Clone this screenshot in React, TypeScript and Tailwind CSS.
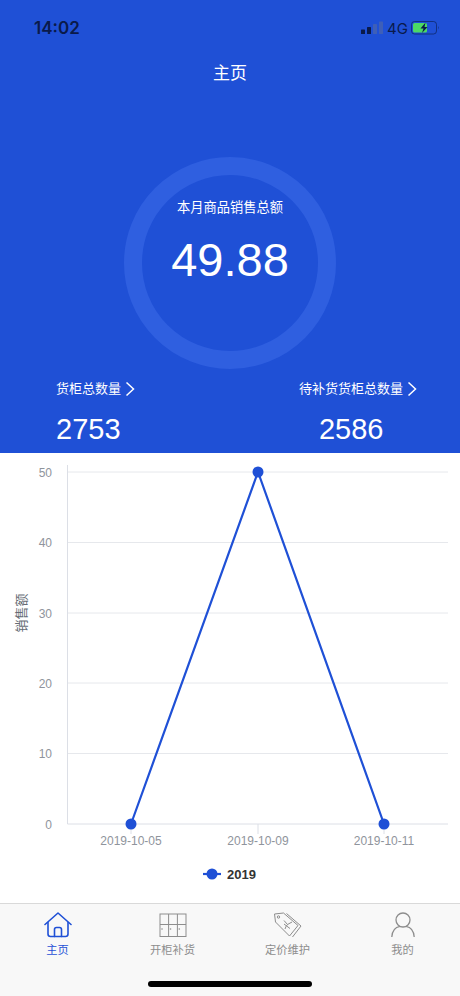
import React from "react";

const FONT = { fontFamily: '"Liberation Sans", "Noto Sans CJK SC", sans-serif' };
const INTER = { fontFamily: 'Inter, "Liberation Sans", sans-serif' };

function Chevron() {
  return (
    <svg width="10" height="16" viewBox="0 0 10 16" className="ml-[4px]">
      <path d="M1.5 1.5 L8.5 8 L1.5 14.5" fill="none" stroke="white" strokeWidth="1.5" />
    </svg>
  );
}

function StatusRight() {
  return (
    <div className="flex items-center">
      <svg width="22" height="14" viewBox="0 0 22 14">
        <rect x="0" y="8.5" width="4" height="4.5" rx="0.6" fill="#0a1a4a" />
        <rect x="6" y="6" width="4" height="7" rx="0.6" fill="#0a1a4a" />
        <rect x="12" y="3" width="4" height="10" rx="0.6" fill="#3e5fb8" />
        <rect x="18" y="0.5" width="4" height="12.5" rx="0.6" fill="#3e5fb8" />
      </svg>
      <span className="ml-[4px] w-[22px] text-[15px] leading-none text-[#0a1a4a]" style={INTER}>4G</span>
      <svg width="29" height="14" viewBox="0 0 29 14" className="ml-[2px]">
        <rect x="0.5" y="0.5" width="25" height="12.5" rx="3" fill="none" stroke="#0a1a4a" strokeOpacity="0.6" />
        <rect x="2" y="2" width="14" height="9.5" rx="1.5" fill="#4cd964" />
        <path d="M27 5 Q28.5 6.7 27 8.5 Z" fill="#0a1a4a" fillOpacity="0.6" />
        <path d="M14.5 1.5 L9.5 7.5 L12.5 7.5 L11 12 L16.5 6 L13.5 6 Z" fill="#0a1a4a" />
      </svg>
    </div>
  );
}

function Chart() {
  const grid = [
    [472, "50"],
    [542.5, "40"],
    [613, "30"],
    [683, "20"],
    [753.5, "10"],
    [824, "0"],
  ] as const;
  const dates = [
    [131, "2019-10-05"],
    [258, "2019-10-09"],
    [384, "2019-10-11"],
  ] as const;
  return (
    <svg width="460" height="450" viewBox="0 453 460 450" className="block">
      {grid.map(([y, t]) => (
        <g key={t}>
          <line x1="67.5" x2="448" y1={y} y2={y} stroke={t === "0" ? "#dcdfe6" : "#e6e8ec"} strokeWidth="1" />
          <text x="52" y={y + 4.5} textAnchor="end" fontSize="12" fill="#8f949c">{t}</text>
        </g>
      ))}
      <line x1="67.5" x2="67.5" y1="465" y2="824" stroke="#dcdfe6" />
      {dates.map(([x, t]) => (
        <g key={t}>
          <line x1={x} x2={x} y1="824" y2="834" stroke="#dcdfe6" />
          <text x={x} y="845" textAnchor="middle" fontSize="12" fill="#8f949c">{t}</text>
        </g>
      ))}
      <text transform="translate(26 613) rotate(-90)" textAnchor="middle" fontSize="13" fill="#666c75">销售额</text>
      <polyline points="131,824 258,472 384,824" fill="none" stroke="#1f50d6" strokeWidth="2.2" />
      <circle cx="131" cy="824" r="5.5" fill="#1f50d6" />
      <circle cx="258" cy="472" r="5.5" fill="#1f50d6" />
      <circle cx="384" cy="824" r="5.5" fill="#1f50d6" />
      <line x1="203" x2="221" y1="874" y2="874" stroke="#1f50d6" strokeWidth="2.2" />
      <circle cx="212" cy="874" r="5.5" fill="#1f50d6" />
      <text x="227" y="878.5" fontSize="13" fontWeight="700" fill="#333">2019</text>
    </svg>
  );
}

function TabHome() {
  return (
    <svg width="28" height="26" viewBox="0 0 28 26" fill="none" stroke="#1f50d6" strokeWidth="1.6" strokeLinejoin="round" strokeLinecap="round">
      <path d="M1 12.5 L14 1 L27 12.5" />
      <path d="M4 10.5 V22 Q4 24.5 6.5 24.5 H21.5 Q24 24.5 24 22 V10.5" />
      <path d="M10.5 24.5 V17.5 Q10.5 15.5 12.5 15.5 H15.5 Q17.5 15.5 17.5 17.5 V24.5" />
    </svg>
  );
}

function TabCabinet() {
  return (
    <svg width="28" height="25" viewBox="0 0 28 25" fill="none" stroke="#8d8d8d" strokeWidth="1">
      <rect x="1" y="1" width="26" height="22.5" />
      <path d="M9.6 1 V23.5 M18.4 1 V23.5 M1 11.5 H27" />
      <circle cx="3" cy="16" r="0.8" fill="#8d8d8d" stroke="none" />
      <circle cx="11.5" cy="16" r="0.8" fill="#8d8d8d" stroke="none" />
      <circle cx="20.3" cy="16" r="0.8" fill="#8d8d8d" stroke="none" />
    </svg>
  );
}

function TabTag() {
  return (
    <svg width="29" height="26" viewBox="0 0 29 26" fill="none" stroke="#8d8d8d" strokeWidth="1" strokeLinejoin="round">
      <path d="M1.5 2 L10.5 1 L25 13.5 L16.5 24 L2.5 10 Z" />
      <path d="M13.5 1.5 L28 14 L19.5 25" />
      <circle cx="5.5" cy="5" r="1.2" />
      <path d="M11 8.5 L14.5 12.5 L19 10 M14.5 12.5 L13 14.5 L12 17 M11 12 L17 16.5" />
    </svg>
  );
}

function TabUser() {
  return (
    <svg width="24" height="26" viewBox="0 0 24 26" fill="none" stroke="#8d8d8d" strokeWidth="1.3">
      <circle cx="12" cy="8" r="7" />
      <path d="M0.8 25 C1.2 18.5 5 15 9 14.3 M23.2 25 C22.8 18.5 19 15 15 14.3" />
    </svg>
  );
}

function Tab({ icon, label, active }: { icon: React.ReactNode; label: string; active?: boolean }) {
  return (
    <div className="flex-1 flex flex-col items-center">
      <div className="h-[26px] flex items-end">{icon}</div>
      <span className={`mt-[4px] text-[11.25px] leading-[16px] ${active ? "text-[#1f50d6]" : "text-[#8d8d8d]"}`}>{label}</span>
    </div>
  );
}

export default function App() {
  return (
    <div className="w-[460px] h-[996px] overflow-hidden bg-white flex flex-col" style={FONT}>
      <div className="h-[453px] bg-[#1f50d6] text-white flex flex-col">
        <div className="h-[56px] pl-[34px] pr-[20px] flex items-center justify-between">
          <span className="text-[17px] font-semibold leading-none text-[#0a1a4a]" style={INTER}>14:02</span>
          <StatusRight />
        </div>
        <div className="h-[36px] flex items-center justify-center text-[17px]">主页</div>
        <div className="mt-[65px] flex justify-center">
          <div className="w-[212px] h-[212px] rounded-full border-[18.5px] border-[#2f5fe0] flex flex-col items-center">
            <span className="mt-[22.5px] text-[13.25px] leading-[20px]">本月商品销售总额</span>
            <span className="mt-[16px] text-[47px] leading-[52px]">49.88</span>
          </div>
        </div>
        <div className="mt-[10px] flex pl-[56px] pr-[43px] justify-between">
          <div className="flex flex-col">
            <div className="flex items-center text-[13px] leading-[20px]">货柜总数量<Chevron /></div>
            <div className="mt-[12px] text-[29px] leading-[36px]">2753</div>
          </div>
          <div className="flex flex-col">
            <div className="flex items-center text-[13px] leading-[20px]">待补货货柜总数量<Chevron /></div>
            <div className="mt-[12px] ml-[20px] text-[29px] leading-[36px]">2586</div>
          </div>
        </div>
      </div>
      <div className="h-[450px]"><Chart /></div>
      <div className="relative flex-1 bg-[#f8f8f8] border-t border-[#d9d9d9] pt-[8px]">
        <div className="flex">
          <Tab icon={<TabHome />} label="主页" active />
          <Tab icon={<TabCabinet />} label="开柜补货" />
          <Tab icon={<TabTag />} label="定价维护" />
          <Tab icon={<TabUser />} label="我的" />
        </div>
        <div className="absolute left-[148px] bottom-[9px] w-[164px] h-[6px] rounded-full bg-black" />
      </div>
    </div>
  );
}
